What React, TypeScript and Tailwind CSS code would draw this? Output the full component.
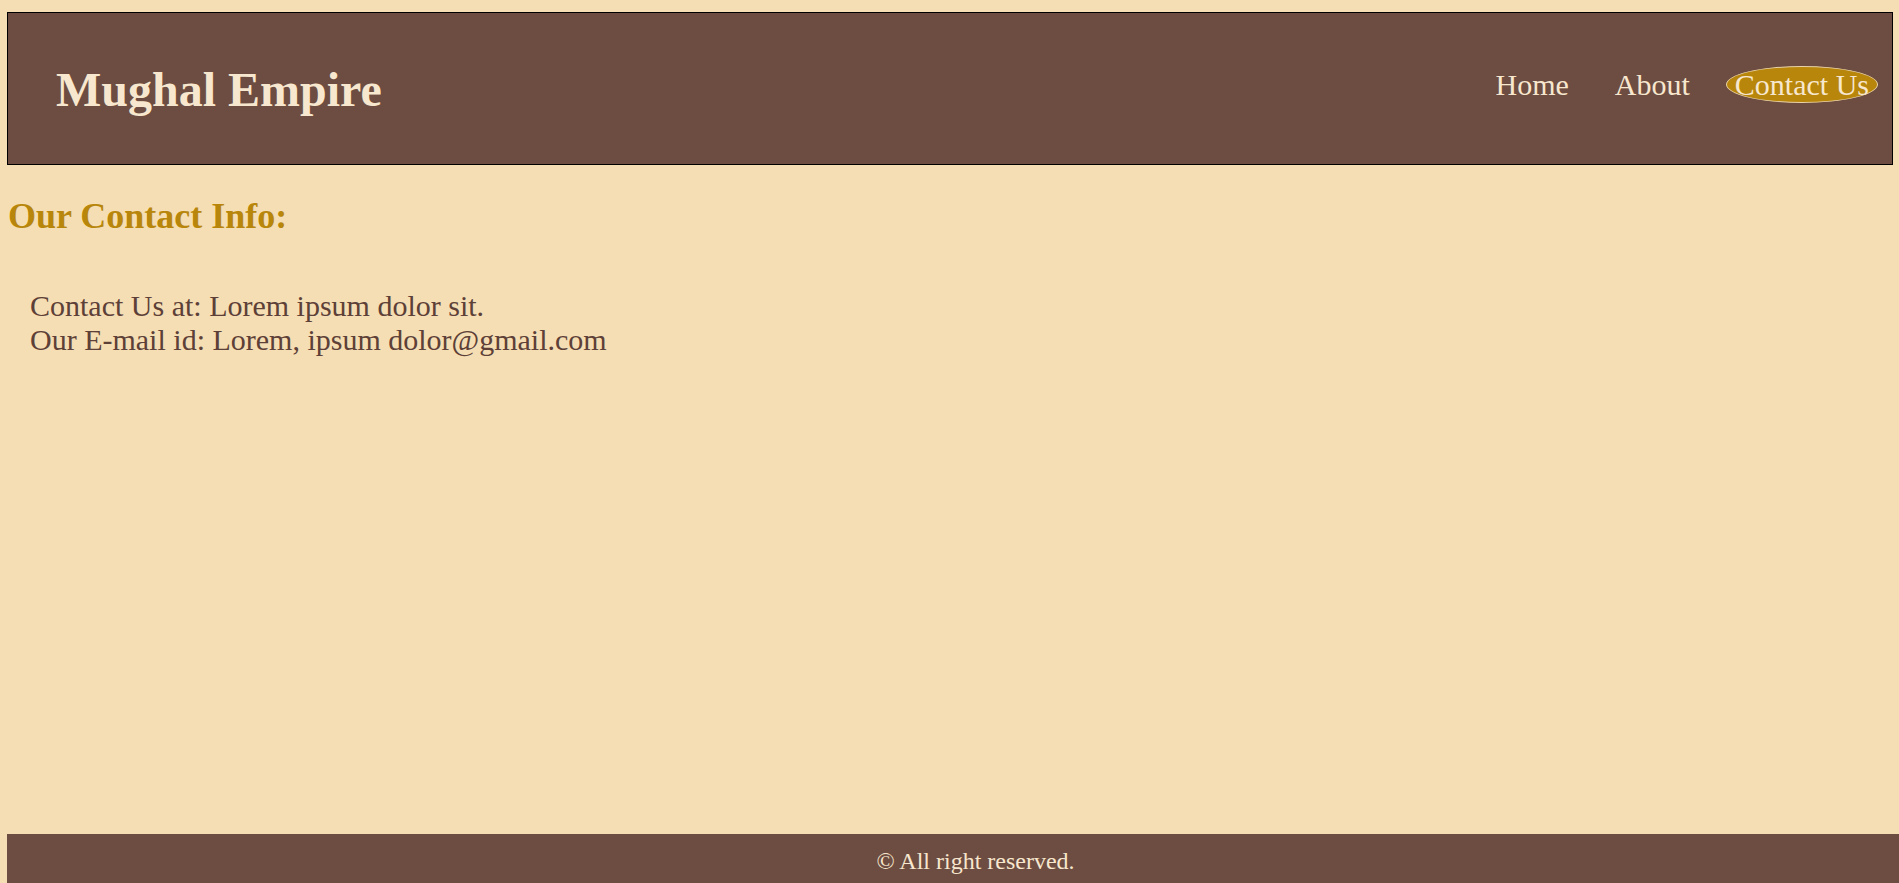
import React from 'react';

const links = [
  { label: 'Home', active: false },
  { label: 'About', active: false },
  { label: 'Contact Us', active: true },
];

const NavBar = () => {
  return (
    <header className="box-border h-[153px] flex justify-between items-start bg-[#6d4c41] border border-black">
      <h1 className="mt-[49px] ml-[48px] text-[48px] leading-[55px] font-bold text-[#f7e7ce]">
        Mughal Empire
      </h1>
      <nav className="mt-[53px] mr-[14px]">
        <ul className="flex items-center gap-[26px]">
          {links.map((link) => (
            <li
              key={link.label}
              className={`box-border h-[37px] flex items-center text-[30px] leading-[34px] text-[#f7e7ce] border rounded-[50%] ${
                link.active ? 'px-[8px] bg-[#b8860b] border-[#e9d3a8]' : 'px-[9px] border-transparent'
              }`}
            >
              {link.label}
            </li>
          ))}
        </ul>
      </nav>
    </header>
  );
};

const App = () => {
  return (
    <div className="h-screen overflow-hidden flex flex-col bg-[#f5deb3] font-['Liberation_Serif','Times_New_Roman',serif]">
      <div className="flex-1 pt-[12px] pl-[7px] pr-[6px]">
        <NavBar />
        <h2 className="mt-[31px] ml-[1px] text-[36px] leading-[41px] font-bold text-[#b8860b]">
          Our Contact Info:
        </h2>
        <div className="mt-[52px] ml-[23px] text-[30px] leading-[34px] text-[#5d4037]">
          <p>Contact Us at: Lorem ipsum dolor sit.</p>
          <p>Our E-mail id: Lorem, ipsum dolor@gmail.com</p>
        </div>
      </div>
      <footer className="ml-[7px] h-[49px] flex justify-center pl-[45px] pt-[13px] bg-[#6d4c41] text-[24px] leading-[28px] text-[#f7e7ce]">
        © All right reserved.
      </footer>
    </div>
  );
};

export default App;
